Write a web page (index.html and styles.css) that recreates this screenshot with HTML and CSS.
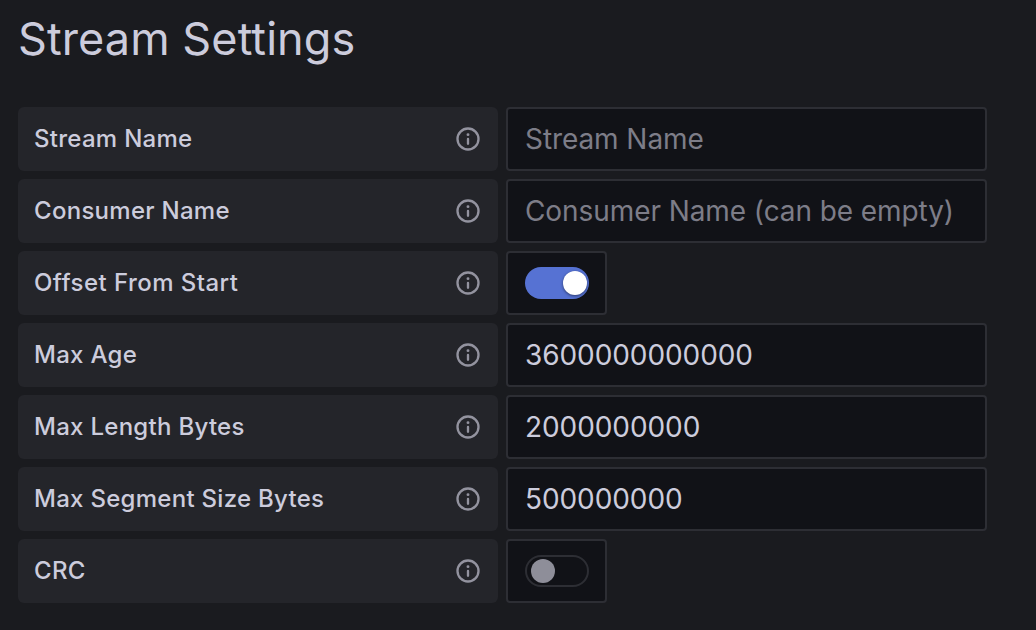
FILE: index.html
```html
<!DOCTYPE html>
<html lang="en">
<head>
<meta charset="utf-8">
<title>Stream Settings</title>
<link rel="stylesheet" href="styles.css">
</head>
<body>
<svg class="sprite" aria-hidden="true">
  <symbol id="info" viewBox="0 0 24 24">
    <path fill="currentColor" d="M12 2a10 10 0 1 0 10 10A10 10 0 0 0 12 2zm0 18a8 8 0 1 1 8-8 8 8 0 0 1-8 8zm0-9a1 1 0 0 0-1 1v4a1 1 0 0 0 2 0v-4a1 1 0 0 0-1-1zm0-4a1.25 1.25 0 1 0 0 2.500 1.250 1.250 0 0 0 0-2.500z"/>
  </symbol>
</svg>
<main class="settings">
  <h1 class="title">Stream Settings</h1>
  <div class="row"><div class="label"><span>Stream Name</span><svg class="icon"><use href="#info"/></svg></div><input class="field" placeholder="Stream Name"></div>
  <div class="row"><div class="label"><span>Consumer Name</span><svg class="icon"><use href="#info"/></svg></div><input class="field" placeholder="Consumer Name (can be empty)"></div>
  <div class="row"><div class="label"><span class="loose">Offset From Start</span><svg class="icon"><use href="#info"/></svg></div><div class="switch-box"><div class="switch on"></div></div></div>
  <div class="row"><div class="label"><span>Max Age</span><svg class="icon"><use href="#info"/></svg></div><input class="field" value="3600000000000"></div>
  <div class="row"><div class="label"><span>Max Length Bytes</span><svg class="icon"><use href="#info"/></svg></div><input class="field" value="2000000000"></div>
  <div class="row"><div class="label"><span>Max Segment Size Bytes</span><svg class="icon"><use href="#info"/></svg></div><input class="field" value="500000000"></div>
  <div class="row"><div class="label"><span>CRC</span><svg class="icon"><use href="#info"/></svg></div><div class="switch-box"><div class="switch"></div></div></div>
</main>
</body>
</html>
```
FILE: styles.css
```css
* { box-sizing: border-box; }
body {
  margin: 0;
  height: 630px;
  overflow: hidden;
  background: #1a1b1f;
  color: #ccccdc;
  font-family: Inter, "Liberation Sans", sans-serif;
}
.sprite { display: none; }
.settings { padding: 11px 0 0 18px; }
.title {
  margin: 0 0 40px;
  font-size: 45px;
  line-height: 56px;
  font-weight: 400;
  letter-spacing: 0.08px;
}
.row { display: flex; gap: 8px; margin-bottom: 8px; }
.label {
  display: flex;
  align-items: center;
  justify-content: space-between;
  width: 480px;
  height: 64px;
  padding: 0 16px;
  border-radius: 6px;
  background: #24252a;
  font-size: 24px;
  font-weight: 500;
  letter-spacing: 0.28px;
}
.label span { padding-bottom: 2px; }
.loose { letter-spacing: 0.46px; }
.icon { width: 28px; height: 28px; color: #93939f; }
.field {
  width: 481px;
  height: 64px;
  padding: 0 17px;
  border: 2px solid #2d2e34;
  border-radius: 4px;
  outline: 0;
  background: #111217;
  color: #ccccdc;
  font: 400 28px Inter, "Liberation Sans", sans-serif;
  letter-spacing: -0.08px;
}
.field::placeholder { color: #7d7d88; opacity: 1; }
.switch-box {
  display: flex;
  align-items: center;
  justify-content: center;
  width: 101px;
  height: 64px;
  border: 2px solid #2d2e34;
  border-radius: 4px;
  background: #111217;
}
.switch {
  display: flex;
  align-items: center;
  width: 64px;
  height: 32px;
  padding: 0 4px;
  border: 2px solid #2d2e34;
  border-radius: 16px;
}
.switch::after {
  content: "";
  width: 24px;
  height: 24px;
  border-radius: 50%;
  background: #8e8e99;
}
.switch.on {
  justify-content: flex-end;
  padding: 0 2px;
  border: 0;
  background: #5672d3;
}
.switch.on::after { background: #fff; box-shadow: 0 1px 3px rgba(0, 0, 0, 0.5); }
```
